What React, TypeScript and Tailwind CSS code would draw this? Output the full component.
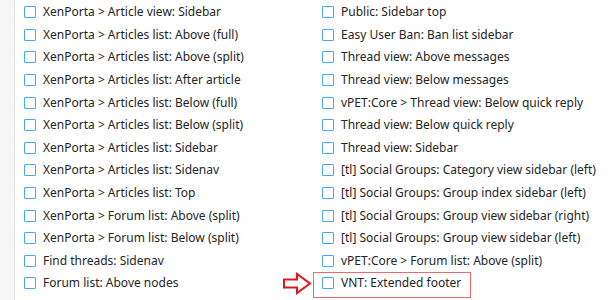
import React from "react";

const left = [
  "XenPorta > Article view: Sidebar",
  "XenPorta > Articles list: Above (full)",
  "XenPorta > Articles list: Above (split)",
  "XenPorta > Articles list: After article",
  "XenPorta > Articles list: Below (full)",
  "XenPorta > Articles list: Below (split)",
  "XenPorta > Articles list: Sidebar",
  "XenPorta > Articles list: Sidenav",
  "XenPorta > Articles list: Top",
  "XenPorta > Forum list: Above (split)",
  "XenPorta > Forum list: Below (split)",
  "Find threads: Sidenav",
  "Forum list: Above nodes",
];

const right = [
  "Public: Sidebar top",
  "Easy User Ban: Ban list sidebar",
  "Thread view: Above messages",
  "Thread view: Below messages",
  "vPET:Core > Thread view: Below quick reply",
  "Thread view: Below quick reply",
  "Thread view: Sidebar",
  "[tl] Social Groups: Category view sidebar (left)",
  "[tl] Social Groups: Group index sidebar (left)",
  "[tl] Social Groups: Group view sidebar (right)",
  "[tl] Social Groups: Group view sidebar (left)",
  "vPET:Core > Forum list: Above (split)",
  "VNT: Extended footer",
];

const Check = ({ label, marked }: { label: string; marked?: boolean }) => (
  <label className="relative flex h-[22.6px] items-center gap-[7px]">
    <span className="h-[12px] w-[12px] shrink-0 rounded-[1px] border-[1.5px] border-[#4aa8ec] bg-white" />
    <span className="whitespace-nowrap">{label}</span>
    {marked && (
      <>
        <span className="absolute left-[-9px] top-[-0.5px] h-[26px] w-[158px] border border-[#ec6a6e]" />
        <svg
          className="absolute left-[-40px] top-[0px]"
          width="31"
          height="23"
          viewBox="0 0 31 23"
        >
          <path
            d="M2 7.5 H15 V2 L28 11.5 L15 21 V15.5 H2 Z"
            fill="white"
            stroke="#e3161b"
            strokeWidth="2"
            strokeLinejoin="miter"
          />
        </svg>
      </>
    )}
  </label>
);

export default function App() {
  return (
    <div className="flex h-[300px] w-[608px] overflow-hidden bg-white font-['Noto_Sans',sans-serif] text-[12px] text-[#252525]">
      <div className="w-[15px] shrink-0 border-r border-[#e3e3e3] bg-[#f6f6f6]" />
      <div className="grid grid-cols-[298px_1fr] pl-[9px] pt-[1px]">
        <div className="flex flex-col">
          {left.map((t) => (
            <Check key={t} label={t} />
          ))}
        </div>
        <div className="flex flex-col">
          {right.map((t, i) => (
            <Check key={t} label={t} marked={i === right.length - 1} />
          ))}
        </div>
      </div>
    </div>
  );
}
